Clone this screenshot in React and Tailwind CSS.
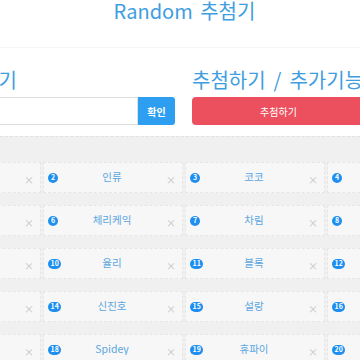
import React from "react";

const rows = [
  [
    { no: 1, name: "가나" },
    { no: 2, name: "인류" },
    { no: 3, name: "코코" },
    { no: 4, name: "하루" },
  ],
  [
    { no: 5, name: "다온" },
    { no: 6, name: "체리케익" },
    { no: 7, name: "차림" },
    { no: 8, name: "모모" },
  ],
  [
    { no: 9, name: "소라" },
    { no: 10, name: "율리" },
    { no: 11, name: "블록" },
    { no: 12, name: "나비" },
  ],
  [
    { no: 13, name: "별이" },
    { no: 14, name: "신진호" },
    { no: 15, name: "설랑" },
    { no: 16, name: "로이" },
  ],
  [
    { no: 17, name: "구름" },
    { no: 18, name: "Spidey" },
    { no: 19, name: "휴파이" },
    { no: 20, name: "미루" },
  ],
];

const NameCard = ({ no, name }) => (
  <div className="flex h-[31px] items-center border border-dashed border-[#e6e6e6] bg-[#f7f7f7] pl-[4px] pr-[6px]">
    {/* Number badge */}
    <div className="flex w-[22px] shrink-0 justify-start">
      <span className="inline-flex h-[10px] min-w-[10px] items-center justify-center rounded-full bg-[#1e8ff0] px-[2.5px] text-[7px] font-bold leading-none text-white">
        {no}
      </span>
    </div>

    {/* Name */}
    <div className="flex-1 truncate text-center text-[10.5px] leading-none text-[#5aa6e0]">
      {name}
    </div>

    {/* Remove */}
    <div className="flex w-[22px] shrink-0 justify-end pt-[5px]">
      <span className="text-[10px] leading-none text-[#c4c4c4]">×</span>
    </div>
  </div>
);

const App = () => {
  return (
    <div
      className="h-[360px] w-[360px] overflow-hidden bg-white"
      style={{ fontFamily: '"Noto Sans CJK KR", "Noto Sans", sans-serif' }}
    >
      {/* Header */}
      <div className="h-[48px] border-b border-[#f6f6f6] pl-[9px] text-center">
        <h1 className="whitespace-nowrap text-[20px] leading-[22px] text-[#3f9ee0]">
          Random <span className="ml-[3px]">추첨기</span>
        </h1>
      </div>

      {/* Input / Draw */}
      <div className="flex pt-[21px]">
        <div className="ml-[-125px] w-[300px] shrink-0">
          <div className="flex w-[142px] justify-end">
            <h2 className="shrink-0 whitespace-nowrap text-[20px] leading-[22px] text-[#3f9ee0]">
              참가자 입력하기
            </h2>
          </div>
          <div className="mt-[6px] flex h-[28px]">
            <input
              type="text"
              className="h-full flex-1 rounded-l-[3px] border border-[#dedede] px-2 text-[11px] outline-none"
            />
            <button className="h-full w-[37px] rounded-r-[3px] bg-[#2d9ef0] text-[10px] font-bold text-white">
              확인
            </button>
          </div>
        </div>

        <div className="ml-[17px] w-[173px] shrink-0">
          <h2 className="whitespace-nowrap text-[20px] leading-[22px] text-[#3f9ee0]">
            추첨하기<span className="mx-[8px]">/</span>추가기능
          </h2>
          <button className="mt-[6px] h-[28px] w-full rounded-[4px] bg-[#ec505e] text-[10px] text-white">
            추첨하기
          </button>
        </div>
      </div>

      {/* Participants */}
      <div className="mt-[11px] h-[300px] border-t border-dashed border-[#e2e2e2] bg-[#f0f0f0] pt-[25px]">
        <div className="ml-[-99px] grid w-[566px] grid-cols-[repeat(4,140px)] gap-x-[2px] gap-y-[12px]">
          {rows.flat().map((p) => (
            <NameCard key={p.no} no={p.no} name={p.name} />
          ))}
        </div>
      </div>
    </div>
  );
};

export default App;
